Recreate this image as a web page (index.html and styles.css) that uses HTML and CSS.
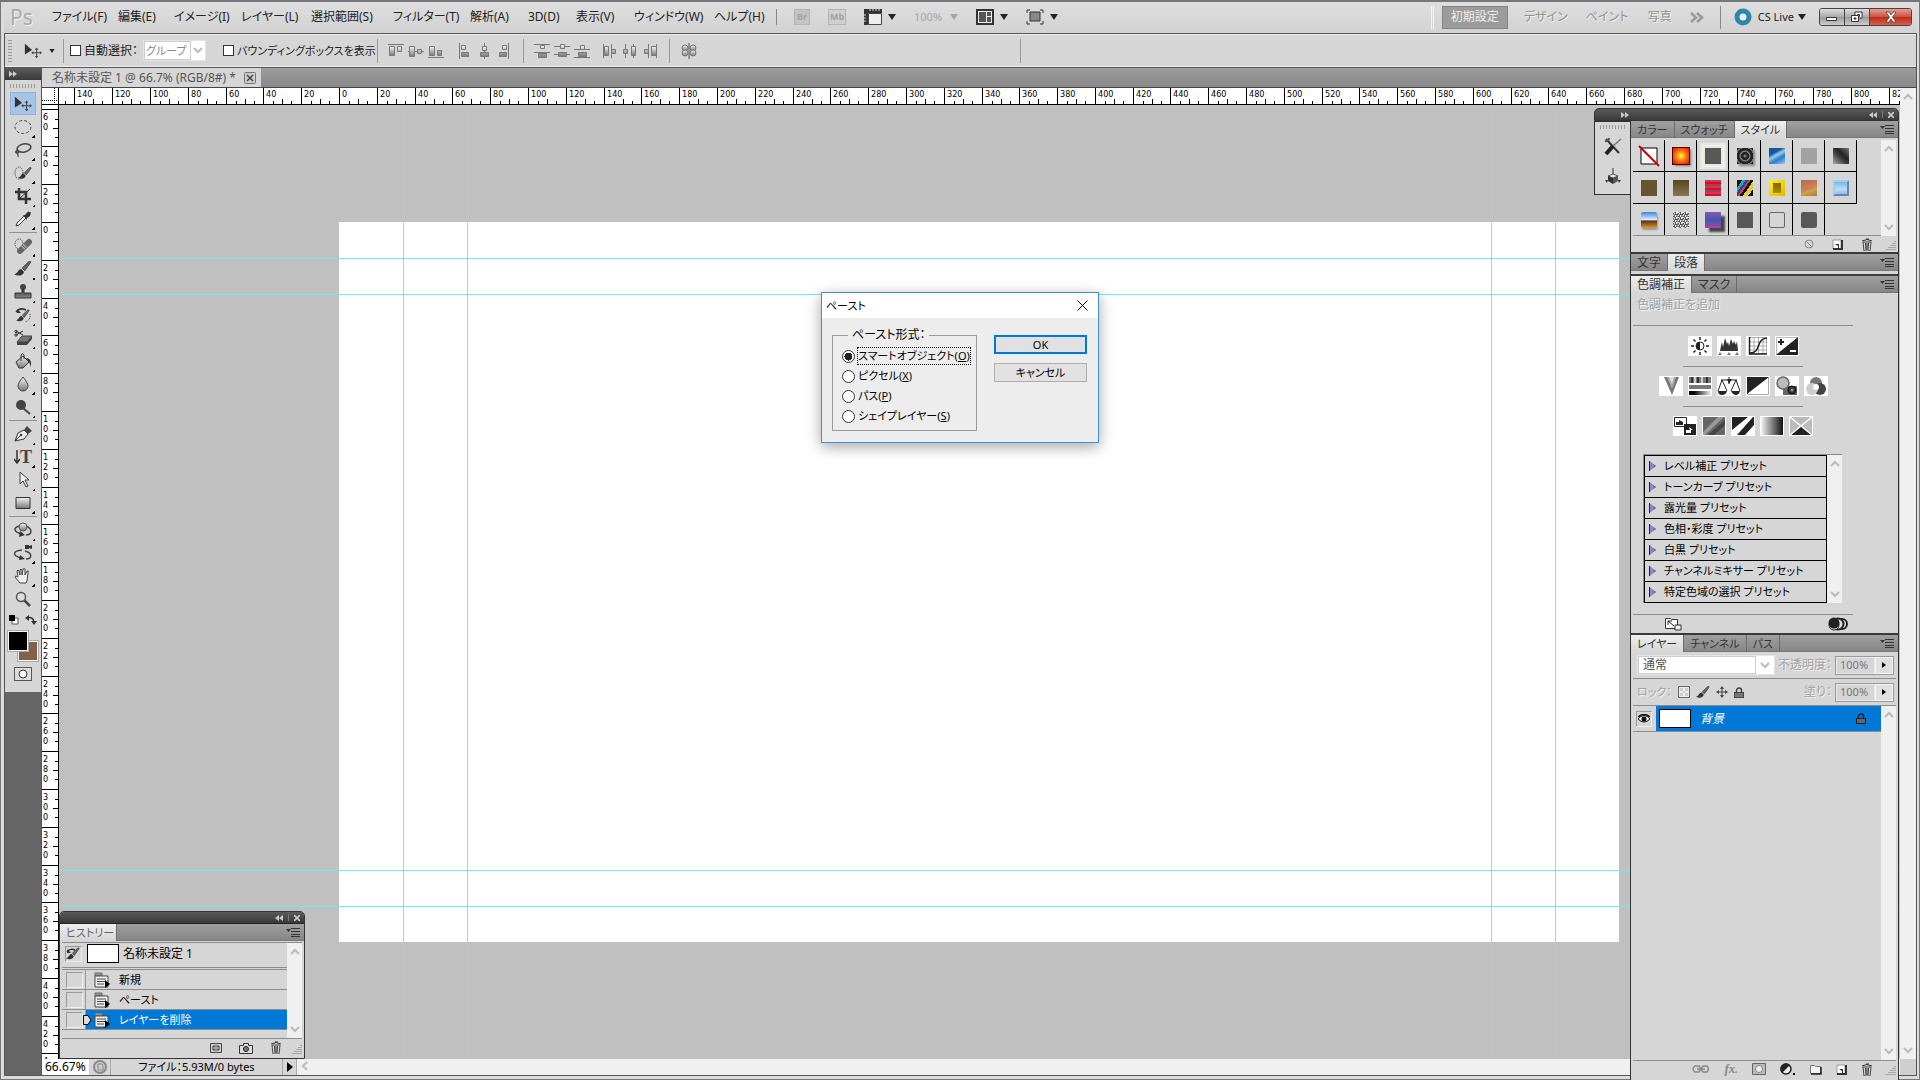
FILE: index.html
```html
<!DOCTYPE html>
<html lang="ja">
  <head>
    <meta charset="UTF-8" />
    <title>名称未設定 1 @ 66.7% (RGB/8#) *</title>
    <link rel="stylesheet" href="styles.css">
  </head>
  <body>
    <!-- shared icons -->
    <svg class="defs" aria-hidden="true">
      <defs>
        <linearGradient id="steel" x1="0" y1="0" x2="0" y2="1"><stop offset="0" stop-color="#f4f4f4" /><stop offset="1" stop-color="#777" /></linearGradient>
        <linearGradient id="dark" x1="0" y1="0" x2="0" y2="1"><stop offset="0" stop-color="#333" /><stop offset="1" stop-color="#888" /></linearGradient>
        <linearGradient id="side" x1="0" y1="0" x2="1" y2="0"><stop offset="0" stop-color="#f4f4f4" /><stop offset="1" stop-color="#111" /></linearGradient>
      </defs>
      <symbol id="down" viewBox="0 0 8 6"><path d="M0 0h8L4 6z" fill="currentColor" /></symbol>
      <symbol id="chev-down" viewBox="0 0 10 7"><path d="M1 1l4 4 4-4" fill="none" stroke="currentColor" stroke-width="2" /></symbol>
      <symbol id="chev-up" viewBox="0 0 10 7"><path d="M1 6l4-4 4 4" fill="none" stroke="currentColor" stroke-width="2" /></symbol>
      <symbol id="rewind" viewBox="0 0 8 6"><path d="M4 0v6L0 3zM8 0v6L4 3z" fill="#ccc" /></symbol>
      <symbol id="forward" viewBox="0 0 8 6"><path d="M0 0v6l4-3zM4 0v6l4-3z" fill="#ccc" /></symbol>
      <symbol id="cross" viewBox="0 0 6 6"><path d="M0 0l6 6M6 0L0 6" stroke="#ccc" stroke-width="1.6" /></symbol>
      <symbol id="panelmenu" viewBox="0 0 14 10"><path d="M0 2h5L2.500 5z" fill="#333" /><path d="M5 1.500h9M5 4.500h9M5 7.500h9M5 9.500h9" stroke="#333" /></symbol>
      <symbol id="grip" viewBox="0 0 10 10"><path d="M9 0v10M7 2v8M5 4v6M3 6v4M1 8v2" stroke="#777" stroke-dasharray="1 1" /></symbol>
      <symbol id="trash" viewBox="0 0 12 13"><path d="M2 4h8l-1 9H3z" fill="#ddd" stroke="#444" /><path d="M1 3q5-3 10 0M5 1h3M4.500 5l.5 7M6 5v7M7.500 5L7 12" fill="none" stroke="#333" /></symbol>
      <symbol id="newpage" viewBox="0 0 11 11"><path d="M1 1h8v9H1z" fill="#fff" stroke="#999" /><path d="M1 10h9V1" fill="none" stroke="#333" stroke-width="2" /><path d="M3 5h4v4H6V7z" fill="#333" /></symbol>
      <symbol id="state" viewBox="0 0 16 16"><path d="M1 1h7v3H1z" fill="#999" stroke="#666" /><path d="M1 4h13v11H1z" fill="#f4f4f4" stroke="#444" /><path d="M3 7h9M3 9.500h9M3 12h7" stroke="#444" /><path d="M11 8v8l5-4z" fill="#000" /></symbol>
      <symbol id="brush" viewBox="0 0 20 18"><path d="M19 1l-2-1-8 8 3 3z" fill="#666" stroke="#222" stroke-width=".7" /><path d="M8 9c-4 0-3 5-8 6 5 3 11 1 11-3z" fill="#333" /></symbol>
      <symbol id="lock" viewBox="0 0 10 11"><path d="M2.500 5V3.500a2.500 2.500 0 015 0V5" fill="none" stroke="currentColor" stroke-width="1.500" /><path d="M0 5h10v6H0z" fill="currentColor" /><path d="M1 7h8M1 9h8" stroke="#aaa" /></symbol>
      <symbol id="cross4" viewBox="0 0 12 12"><path d="M6 1v10M1 6h10" stroke="#444" /><path d="M6 0l2 3H4zM6 12l2-3H4zM0 6l3-2v4zM12 6L9 4v4z" fill="#444" /></symbol>
      <symbol id="move" viewBox="0 0 20 16"><path d="M1 0l8 7-8 5z" fill="#333" /><path d="M14 5v10M9 10h10" stroke="#444" stroke-width="1.200" /><path d="M14 4l2 2.500h-4zM14 16l2-2.500h-4zM8 10l2.500-2v4zM20 10l-2.500-2v4z" fill="#444" /></symbol>
    </svg>

    <div class="app">
      <header class="menubar">
        <span class="logo">Ps</span>
        <nav class="menu">
          <a href="#">ファイル(F)</a>
          <a href="#">編集(E)</a>
          <a href="#">イメージ(I)</a>
          <a href="#">レイヤー(L)</a>
          <a href="#">選択範囲(S)</a>
          <a href="#">フィルター(T)</a>
          <a href="#">解析(A)</a>
          <a href="#">3D(D)</a>
          <a href="#">表示(V)</a>
          <a href="#">ウィンドウ(W)</a>
          <a href="#">ヘルプ(H)</a>
        </nav>
        <div class="appbar">
          <button class="badge" disabled>Br</button>
          <button class="badge folder" disabled>Mb</button>
          <button class="drop" aria-label="エクストラを表示">
            <svg width="18" height="16"><path d="M4.500 4.500h13v11h-13z" fill="#eee" stroke="#444" /><path d="M0 0h18v4H4v12H0z" fill="#333" /><path d="M6 0v2M9 0v2M12 0v2M15 0v2M0 6h2M0 9h2M0 12h2" stroke="#ddd" /></svg>
            <svg class="arrow"><use href="#down" /></svg>
          </button>
          <button class="drop zoom" disabled>100% <svg class="arrow"><use href="#down" /></svg></button>
          <button class="drop" aria-label="ドキュメントの配置">
            <svg width="18" height="16"><path d="M1 1h16v14H1z" fill="#eee" stroke="#333" stroke-width="2" /><path d="M3 3h7v10H3zM11 3h4v4h-4zM11 8h4v5h-4z" fill="#555" /></svg>
            <svg class="arrow"><use href="#down" /></svg>
          </button>
          <button class="drop" aria-label="スクリーンモード">
            <svg width="18" height="16"><path d="M4 3h10v9H4z" fill="#888" stroke="#333" /><path d="M1 4V1h3M14 1h3v3M17 12v3h-3M4 15H1v-3" fill="none" stroke="#333" /></svg>
            <svg class="arrow"><use href="#down" /></svg>
          </button>
        </div>
        <div class="workspaces">
          <button class="ws current">初期設定</button>
          <button class="ws">デザイン</button>
          <button class="ws">ペイント</button>
          <button class="ws">写真</button>
          <button class="more" aria-label="その他"><svg width="14" height="11"><path d="M1 1l5 4.500L1 10M7 1l5 4.500L7 10" fill="none" stroke="#999" stroke-width="2.500" /></svg></button>
        </div>
        <button class="cslive">
          <svg width="18" height="18"><circle cx="9" cy="9" r="6" fill="#eee" stroke="#2d86ad" stroke-width="5" /></svg>
          CS Live
          <svg class="arrow"><use href="#down" /></svg>
        </button>
        <div class="winbuttons">
          <button aria-label="最小化"><svg width="14" height="12"><path d="M1.500 6.500h10v3h-10z" fill="#fff" stroke="#333" /></svg></button>
          <button aria-label="元に戻す"><svg width="14" height="12"><path d="M5 1h7v6H5z" fill="#fff" stroke="#333" /><path d="M7.500 3.500h2v2h-2z" fill="none" stroke="#333" /><path d="M1.500 4.500h7v6h-7z" fill="#fff" stroke="#333" /><path d="M4 7h2v1H4z" stroke="#333" /></svg></button>
          <button class="close" aria-label="閉じる"><svg width="14" height="12"><path d="M2 1h3l2 3 2-3h3L8.500 6l3.500 5H9L7 8l-2 3H2l3.500-5z" fill="#fff" stroke="#444" stroke-width=".8" /></svg></button>
        </div>
      </header>

      <div class="frame">
        <div class="options">
          <span class="dots"></span>
          <button class="drop tool" aria-label="移動ツール">
            <svg width="18" height="16"><use href="#move" /></svg>
            <svg class="arrow small"><use href="#down" /></svg>
          </button>
          <div class="group auto">
            <label><input type="checkbox"> 自動選択：</label>
            <span class="select">
              <select disabled aria-label="自動選択の対象"><option>グループ</option></select>
              <svg width="10" height="7"><use href="#chev-down" /></svg>
            </span>
            <label class="bbox"><input type="checkbox"> バウンディングボックスを表示</label>
          </div>
          <div class="group align">
            <span class="three">
              <svg width="16" height="16"><path d="M0 1.500h16" stroke="#777" /><path d="M1.500 3.500h5v9h-5zM9.500 3.500h4v5h-4z" fill="url(#steel)" stroke="#777" /></svg>
              <svg width="16" height="16"><path d="M0 8.500h16" stroke="#777" /><path d="M1.500 3.500h5v10h-5zM9.500 6.500h4v4h-4z" fill="url(#steel)" stroke="#777" /></svg>
              <svg width="16" height="16"><path d="M0 14.500h16" stroke="#777" /><path d="M1.500 3.500h5v9h-5zM9.500 7.500h4v5h-4z" fill="url(#steel)" stroke="#777" /></svg>
            </span>
            <span class="three">
              <svg width="16" height="16"><path d="M3.500 0v16" stroke="#777" /><path d="M5.500 2.500h4v4h-4zM5.500 9.500h7v4h-7z" fill="url(#steel)" stroke="#777" /></svg>
              <svg width="16" height="16"><path d="M8.500 0v16" stroke="#777" /><path d="M6.500 3.500h4v4h-4zM4.500 9.500h8v4h-8z" fill="url(#steel)" stroke="#777" /></svg>
              <svg width="16" height="16"><path d="M12.500 0v16" stroke="#777" /><path d="M6.500 2.500h4v4h-4zM3.500 9.500h7v4h-7z" fill="url(#steel)" stroke="#777" /></svg>
            </span>
          </div>
          <div class="group align">
            <span class="three">
              <svg width="16" height="16"><path d="M0 1.500h16M0 9.500h16" stroke="#777" /><path d="M6.500 2.500h4v3h-4zM4.500 10.500h8v4h-8z" fill="url(#steel)" stroke="#777" /></svg>
              <svg width="16" height="16"><path d="M0 3.500h16M0 11.500h16" stroke="#777" /><path d="M6.500 1.500h4v4h-4zM4.500 9.500h8v4h-8z" fill="url(#steel)" stroke="#777" /></svg>
              <svg width="16" height="16"><path d="M0 6.500h16M0 14.500h16" stroke="#777" /><path d="M6.500 2.500h4v4h-4zM4.500 9.500h8v4h-8z" fill="url(#steel)" stroke="#777" /></svg>
            </span>
            <span class="three">
              <svg width="16" height="16"><path d="M1.500 1v14M9.500 1v14" stroke="#777" /><path d="M2.500 3.500h4v9h-4zM9.500 6.500h4v4h-4z" fill="url(#steel)" stroke="#777" /></svg>
              <svg width="16" height="16"><path d="M3.500 1v14M11.500 1v14" stroke="#777" /><path d="M1.500 6.500h4v4h-4zM9.500 3.500h4v9h-4z" fill="url(#steel)" stroke="#777" /></svg>
              <svg width="16" height="16"><path d="M6.500 1v14M14.500 1v14" stroke="#777" /><path d="M2.500 6.500h4v4h-4zM9.500 3.500h5v9h-5z" fill="url(#steel)" stroke="#777" /></svg>
            </span>
          </div>
          <div class="group one">
            <svg width="16" height="16"><ellipse cx="4" cy="5" rx="3" ry="3" fill="url(#steel)" stroke="#777" /><ellipse cx="4" cy="10" rx="3" ry="3" fill="url(#steel)" stroke="#777" /><ellipse cx="12" cy="5" rx="3" ry="3" fill="url(#steel)" stroke="#777" /><ellipse cx="12" cy="10" rx="3" ry="3" fill="url(#steel)" stroke="#777" /><path d="M8 0v16" stroke="#555" /></svg>
          </div>
          <div class="group"></div>
        </div>

        <div class="work">
          <aside class="toolcol">
            <div class="bar"><svg width="8" height="6"><use href="#forward" /></svg></div>
            <div class="toolbox">
              <span class="hdots"></span>
              <button class="t on" aria-label="移動"><svg width="18" height="16"><use href="#move" /></svg></button>
              <button class="t more-tools" aria-label="楕円形選択"><svg width="18" height="16"><ellipse cx="9" cy="8" rx="8" ry="6.500" fill="none" stroke="#444" stroke-dasharray="3 2" /></svg></button>
              <button class="t more-tools" aria-label="なげなわ"><svg width="18" height="16"><ellipse cx="10" cy="6" rx="7" ry="4" transform="rotate(-12 10 6)" fill="none" stroke="#444" stroke-width="1.500" /><path d="M4 8c-4 1-2 4 0 3s0-3-1-2 2 3 1 6" fill="none" stroke="#444" stroke-width="1.200" /></svg></button>
              <button class="t more-tools" aria-label="クイック選択"><svg width="18" height="16"><ellipse cx="5" cy="8" rx="4" ry="6" fill="none" stroke="#333" stroke-dasharray="1 1" /><svg x="4" y="2" width="14" height="13"><use href="#brush" /></svg></svg></button>
              <button class="t more-tools" aria-label="切り抜き"><svg width="18" height="16"><path d="M5 0v11h12M1 4h11v12" fill="none" stroke="#333" stroke-width="2.500" /><path d="M5 11L16 1" stroke="#333" /></svg></button>
              <button class="t more-tools" aria-label="スポイト"><svg width="18" height="16"><path d="M2 15l1-3 7-7 2 2-7 7z" fill="#eee" stroke="#444" /><path d="M9 4l2 0 3-3.500 3 1-1 3.500-3 2 0 2z" fill="#333" /></svg></button>
              <hr>
              <button class="t more-tools" aria-label="スポット修復"><svg width="18" height="16"><ellipse cx="5" cy="6" rx="4" ry="5" fill="none" stroke="#333" stroke-dasharray="1 1" /><path d="M6 13L15 4" stroke="#666" stroke-width="6" stroke-linecap="round" /><path d="M9 10l3-3" stroke="#bbb" stroke-width="5" stroke-dasharray="1 1" /></svg></button>
              <button class="t more-tools" aria-label="ブラシ"><svg width="18" height="16"><use href="#brush" /></svg></button>
              <button class="t more-tools" aria-label="スタンプ"><svg width="18" height="16"><circle cx="9" cy="3" r="3" fill="#444" /><path d="M8 5h2v4h7v5H1V9h7z" fill="url(#dark)" stroke="#333" /></svg></button>
              <button class="t more-tools" aria-label="ヒストリーブラシ"><svg width="18" height="16"><path d="M2 5q4-5 10-2" fill="none" stroke="#333" stroke-width="1.500" /><path d="M3 2l0 4 4 0z" fill="#333" /><path d="M16 7q1 6-5 8" fill="none" stroke="#333" stroke-dasharray="1 1" /><svg x="2" y="2" width="14" height="14"><use href="#brush" /></svg></svg></button>
              <button class="t more-tools" aria-label="消しゴム"><svg width="18" height="16"><path d="M3 12l5-6h10l-5 6z" fill="#777" stroke="#444" /><path d="M3 12v3h10l5-6V6l-5 6z" fill="#444" /><path d="M2 1l7 4M2 5l7-4" stroke="#333" /><circle cx="2" cy="1.500" r="1.200" fill="none" stroke="#333" /><circle cx="2" cy="5" r="1.200" fill="none" stroke="#333" /></svg></button>
              <button class="t more-tools" aria-label="塗りつぶし"><svg width="18" height="16"><path d="M2 9l7-6 6 6-6 6H5z" fill="url(#steel)" stroke="#333" /><path d="M7 8V2q2-3 3 0v4" fill="none" stroke="#333" /><path d="M12 5q6 0 5 9l-2-5z" fill="#333" /></svg></button>
              <button class="t more-tools" aria-label="ぼかし"><svg width="18" height="16"><path d="M9 1q5 6 5 9a5 5 0 01-10 0q0-3 5-9z" fill="url(#steel)" stroke="#444" /></svg></button>
              <button class="t more-tools" aria-label="覆い焼き"><svg width="18" height="16"><path d="M9 9l7 6" stroke="#444" stroke-width="2" /><circle cx="7" cy="6" r="5" fill="#444" /></svg></button>
              <hr>
              <button class="t more-tools" aria-label="ペン"><svg width="18" height="16"><path d="M1 15l3-8 6-3 4 4-4 5z" fill="#eee" stroke="#333" /><path d="M10 4l3-4 5 5-4 3z" fill="#444" /><path d="M1 15l6-6" stroke="#333" /><circle cx="7" cy="9" r="1.200" fill="#333" /></svg></button>
              <button class="t more-tools type" aria-label="縦書き文字"><svg width="6" height="14"><path d="M3 0v12M0 9l3 4 3-4" fill="none" stroke="#333" stroke-width="1.500" /></svg>T</button>
              <button class="t more-tools" aria-label="パス選択"><svg width="18" height="16"><path d="M6 0v12l3-3 3 6 2-1-3-6h4z" fill="#eee" stroke="#444" /></svg></button>
              <button class="t more-tools" aria-label="長方形"><svg width="18" height="16"><path d="M2 2.500h14v11H2z" fill="url(#steel)" stroke="#333" /></svg></button>
              <hr>
              <button class="t more-tools" aria-label="3D回転"><svg width="18" height="16"><path d="M6 4C-1 5-1 10 8 12M12 4c7 3 6 9 0 9" fill="none" stroke="#444" stroke-width="1.500" /><circle cx="9" cy="5" r="4" fill="url(#steel)" stroke="#555" /><path d="M6 9l5 4-6 2z" fill="#333" /></svg></button>
              <button class="t more-tools" aria-label="3Dカメラ"><svg width="18" height="16"><path d="M8 5C-2 6-2 11 8 13M11 6c8 2 7 8 1 8" fill="none" stroke="#444" stroke-width="1.500" /><path d="M11 0h4v4h-4zM15 1l3-1v4l-3-1zM6 10l5 4-6 1z" fill="#333" /></svg></button>
              <button class="t more-tools" aria-label="手のひら"><svg width="18" height="16"><path d="M6 15L1 9q0-2 3 0L3 3q1-2 2 0l1 4V2q1-2 2 0v5l1-6q2-1 2 0v6l2-4q2-1 1 2l-1 8-1 2z" fill="#eee" stroke="#444" /></svg></button>
              <button class="t" aria-label="ズーム"><svg width="18" height="16"><path d="M10 9l6 6" stroke="#444" stroke-width="2.500" /><circle cx="7" cy="6" r="4.500" fill="#ddd" stroke="#555" stroke-width="1.500" /></svg></button>
              <svg class="defaults" width="30" height="12"><path d="M4 4h6v6H4z" fill="#fff" stroke="#555" /><path d="M1 1h6v6H1z" fill="#000" /><path d="M19 4q6-2 7 4" fill="none" stroke="#333" stroke-width="1.500" /><path d="M17 4l4-3v6zM23 7h6l-3 4z" fill="#333" /></svg>
              <div class="colors"><button class="fg" aria-label="描画色"></button><button class="bg" aria-label="背景色"></button></div>
              <button class="mask" aria-label="クイックマスク"><svg width="16" height="12"><circle cx="8" cy="6" r="4" fill="#fff" stroke="#333" /></svg></button>
            </div>
          </aside>

          <main class="doc">
            <div class="tabs">
              <button class="doctab">名称未設定 1 @ 66.7% (RGB/8#) * <svg width="12" height="12"><rect x=".5" y=".5" width="11" height="11" rx="1" fill="#ccc" stroke="#777" /><path d="M3 3l6 6M9 3L3 9" stroke="#444" stroke-width="1.500" /></svg></button>
            </div>
            <div class="view">
              <div class="corner"></div>
              <div class="ruler h"></div>
              <div class="ruler v"></div>
              <div class="stage">
                <div class="paper"></div>
                <i class="guide gv g1"></i><i class="guide gv g2"></i><i class="guide gv g3"></i><i class="guide gv g4"></i>
                <i class="guide gh g5"></i><i class="guide gh g6"></i><i class="guide gh g7"></i><i class="guide gh g8"></i>

                <section class="panel history">
                  <div class="bar">
                    <svg width="8" height="6"><use href="#rewind" /></svg><i></i><svg width="6" height="6"><use href="#cross" /></svg>
                  </div>
                  <div class="ptabs"><button class="on">ヒストリー</button><svg width="14" height="10"><use href="#panelmenu" /></svg></div>
                  <div class="hbody">
                    <div class="hlist">
                      <div class="snap">
                        <span class="box"><svg width="14" height="14"><path d="M1 5q3-4 8-2" fill="none" stroke="#333" stroke-width="1.500" /><path d="M1 2v4h4z" fill="#333" /><svg width="14" height="14"><use href="#brush" /></svg></svg></span>
                        <span class="thumb"></span>名称未設定 1
                      </div>
                      <div class="hrow"><span class="box"></span><span class="name"><svg width="16" height="16"><use href="#state" /></svg>新規</span></div>
                      <div class="hrow"><span class="box"></span><span class="name"><svg width="16" height="16"><use href="#state" /></svg>ペースト</span></div>
                      <div class="hrow sel"><span class="box"></span><span class="name"><svg class="pointer" width="9" height="10"><path d="M.5.500H5l3 4.500-3 4.500H.5z" fill="#ddd" stroke="#000" /></svg><svg width="16" height="16"><use href="#state" /></svg>レイヤーを削除</span></div>
                    </div>
                    <div class="scroll"><svg><use href="#chev-up" /></svg><svg><use href="#chev-down" /></svg></div>
                  </div>
                  <footer>
                    <svg width="12" height="12"><path d="M.5 1.500h11v9H.5z" fill="#ccc" stroke="#444" /><path d="M3 4h6v4H3z" fill="#aaa" stroke="#444" /></svg>
                    <svg width="14" height="12"><path d="M.5 3.500h4v-2h5v2h4v8H.5z" fill="#ddd" stroke="#333" /><circle cx="7" cy="7" r="2.500" fill="#777" stroke="#222" /></svg>
                    <svg width="12" height="13"><use href="#trash" /></svg>
                    <svg class="grip"><use href="#grip" /></svg>
                  </footer>
                </section>
              </div>
              <div class="scroll main"><svg><use href="#chev-up" /></svg><svg><use href="#chev-down" /></svg></div>
            </div>
            <div class="status">
              <input type="text" value="66.67%" aria-label="表示倍率">
              <span class="ver"><svg width="14" height="14"><circle cx="7" cy="7" r="6" fill="#ccc" stroke="#888" stroke-width="2" /><path d="M5 4h4l1 2v4H5z" fill="none" stroke="#888" /></svg></span>
              <span class="info">ファイル：5.93M/0 bytes</span>
              <button aria-label="ステータスメニュー"><svg width="6" height="10"><path d="M0 0l6 5-6 5z" /></svg></button>
              <div class="hscroll"><svg width="7" height="10"><path d="M6 1L2 5l4 4" fill="none" stroke="#bbb" stroke-width="2" /></svg></div>
              <div class="end"></div>
            </div>
          </main>

          <div class="dock">
            <div class="bar wide"><svg width="8" height="6"><use href="#forward" /></svg><b></b><svg width="8" height="6"><use href="#rewind" /></svg><i></i><svg width="6" height="6"><use href="#cross" /></svg></div>
            <div class="dockrow">
              <div class="icons">
                <span class="hdots"></span>
                <svg width="18" height="18"><path d="M2 2l13 14" stroke="#333" stroke-width="2" /><path d="M1 4a3 3 0 004-3" fill="none" stroke="#555" stroke-width="2" /><path d="M17 2L9 9" stroke="#777" stroke-width="1.500" /><path d="M9 9l-7 8" stroke="#222" stroke-width="4" /></svg>
                <svg width="16" height="16"><path d="M8 0v8" stroke="#333" /><path d="M3 8l5-2 5 2-5 2z" fill="#eee" stroke="#555" /><path d="M3 8l5 2v6l-5-3z" fill="#333" /><path d="M8 10l5-2v5l-5 3z" fill="#555" /><path d="M0 12h3l-1 3zM16 12h-3l1 3z" fill="#333" /></svg>
              </div>
              <div class="panels">
                <section class="pnl styles">
                  <div class="ptabs"><button>カラー</button><button>スウォッチ</button><button class="on">スタイル</button><svg width="14" height="10"><use href="#panelmenu" /></svg></div>
                  <div class="sbody">
                    <div class="swatches">
                      <span><svg width="22" height="22"><path d="M3 3h16v16H3z" fill="#fff" stroke="#000" /><path d="M1 1l20 20" stroke="#c00" stroke-width="2" /></svg></span>
                      <span><i class="s fire"></i></span><span class="picked"><i class="s"></i></span><span><i class="s rings"></i></span><span><i class="s blue"></i></span><span><i class="s pale"></i></span><span><i class="s smoke"></i></span>
                      <span><i class="s brown"></i></span><span><i class="s bronze"></i></span><span><i class="s stripes"></i></span><span><i class="s camo"></i></span><span><i class="s gold"></i></span><span><i class="s sand"></i></span><span><i class="s sky"></i></span>
                      <span><i class="s chrome"></i></span><span><i class="s noise"></i></span><span><i class="s violet"></i></span><span><i class="s"></i></span><span><i class="s hollow"></i></span><span><i class="s soft"></i></span><span class="none"></span>
                    </div>
                    <div class="scroll"><svg><use href="#chev-up" /></svg><svg><use href="#chev-down" /></svg></div>
                  </div>
                  <footer>
                    <svg width="10" height="10"><circle cx="5" cy="5" r="4" fill="none" stroke="#888" /><path d="M2 2l6 6" stroke="#888" /></svg>
                    <svg width="11" height="11"><use href="#newpage" /></svg>
                    <svg width="12" height="13"><use href="#trash" /></svg>
                    <svg class="grip"><use href="#grip" /></svg>
                  </footer>
                </section>

                <section class="pnl closed">
                  <div class="ptabs"><button>文字</button><button class="on">段落</button><svg width="14" height="10"><use href="#panelmenu" /></svg></div>
                </section>

                <section class="pnl adjust">
                  <div class="ptabs"><button class="on">色調補正</button><button>マスク</button><svg width="14" height="10"><use href="#panelmenu" /></svg></div>
                  <div class="abody">
                    <p>色調補正を追加</p>
                    <div class="irow first">
                      <button aria-label="明るさ・コントラスト"><svg width="24" height="20"><circle cx="12" cy="10" r="4" fill="#fff" stroke="#222" /><path d="M12 6a4 4 0 000 8z" fill="#222" /><path d="M12 1v3M12 16v3M3 10h3M18 10h3M5.500 3.500l2 2M16.500 14.500l2 2M5.500 16.500l2-2M16.500 5.500l2-2" stroke="#222" stroke-width="1.500" /></svg></button>
                      <button aria-label="レベル補正"><svg width="24" height="20"><path d="M3 15l1-5 1-4 1 5 2-9 2 6 1-2 1 4 2-7 2 5 1-3 2 4 1-4 1 10z" fill="#333" /><path d="M3 16l2 3H1zM12 16l2 3h-4zM20 16l2 3h-4z" fill="#777" /></svg></button>
                      <button aria-label="トーンカーブ"><svg width="24" height="20"><path d="M3.500 1.500h17v16h-17zM3 6h18M3 10h18M3 14h18M8 1v17M12.500 1v17M17 1v17" fill="none" stroke="#aaa" /><path d="M3.500 1v17H21M4 17c12 0 5-14 17-15" fill="none" stroke="#222" stroke-width="1.500" /></svg></button>
                      <button aria-label="露光量"><svg width="24" height="20"><path d="M1.500 1.500h21v17h-21z" fill="#fff" stroke="#bbb" /><path d="M23 1v18H1z" fill="#222" /><path d="M3 6h6M6 3v6" stroke="#222" stroke-width="2" /><path d="M15 15h6" stroke="#fff" stroke-width="2" /></svg></button>
                    </div>
                    <div class="irow">
                      <button aria-label="自然な彩度"><svg width="24" height="20"><path d="M5 1h15l-7 18z" fill="#777" /><path d="M8 1h9l-4 12z" fill="#aaa" /><path d="M10 1h5l-2 7z" fill="#ddd" /></svg></button>
                      <button aria-label="色相・彩度"><svg width="24" height="20"><path d="M1 1h22v6H1zM1 9h22v4H1z" fill="#777" /><path d="M4 1v6M10 1v6M19 1v6" stroke="#333" stroke-width="2" /><path d="M7 1v6M14 1v6" stroke="#ccc" stroke-width="2" /><path d="M1 15h22v4H1z" fill="#000" /><path d="M7 15h16v4H7z" fill="url(#side)" transform="rotate(180 15 17)" /></svg></button>
                      <button aria-label="カラーバランス"><svg width="24" height="20"><path d="M12 1v7M4 4h16M5 4L1 15M5 4l5 11M19 4l-5 11M19 4l4 11" fill="none" stroke="#222" /><path d="M1 15h9q-1 4-5 4t-4-4zM14 15h9q-1 4-4 4t-5-4zM10 3h5l-3 5z" fill="#222" /></svg></button>
                      <button aria-label="白黒"><svg width="24" height="20"><path d="M1.500 1.500h21v17h-21z" fill="#fff" stroke="#aaa" /><path d="M1 1h22L1 18z" fill="#222" /></svg></button>
                      <button aria-label="レンズフィルター"><svg width="24" height="20"><path d="M8 10h14v9H8z" fill="#666" /><circle cx="17" cy="14" r="4" fill="#333" stroke="#111" /><circle cx="17" cy="14" r="1.500" fill="#999" /><circle cx="8" cy="7" r="6" fill="#bbb" stroke="#666" stroke-width="1.500" /></svg></button>
                      <button aria-label="チャンネルミキサー"><svg width="24" height="20"><circle cx="12" cy="7" r="6" fill="#777" /><circle cx="16" cy="13" r="6" fill="#444" /><circle cx="8" cy="13" r="6" fill="#ccc" /><circle cx="12" cy="11" r="3" fill="#fff" /></svg></button>
                    </div>
                    <div class="irow">
                      <button aria-label="階調の反転"><svg width="24" height="20"><path d="M1.500 1.500h12v9h-12z" fill="#fff" stroke="#222" /><path d="M3 6h3V4l4 2v3H3zM11 8h12v11H11z" fill="#222" /><path d="M13 14h4l-1-3 4 3h-2v3h-5z" fill="#fff" /></svg></button>
                      <button aria-label="ポスタリゼーション"><svg width="24" height="20"><path d="M1 1h22v18H1z" fill="#666" /><path d="M1 16L16 1h6L3 19H1z" fill="#999" /><path d="M6 19L23 4v5L12 19z" fill="#444" /></svg></button>
                      <button aria-label="2階調化"><svg width="24" height="20"><path d="M1 1h16L1 14zM6 19L22 1h1v8L14 19z" fill="#222" /></svg></button>
                      <button aria-label="グラデーションマップ"><svg width="24" height="20"><path d="M1 1h22v18H1z" fill="url(#side)" /></svg></button>
                      <button aria-label="特定色域の選択"><svg width="24" height="20"><path d="M1 1h22v18H1z" fill="#bbb" /><path d="M2 19l10-9 11 9z" fill="#222" /><path d="M1 1l22 18M23 1L1 19" stroke="#fff" stroke-width="1.500" /></svg></button>
                    </div>
                    <div class="presets">
                      <ul>
                        <li>レベル補正 プリセット</li>
                        <li>トーンカーブ プリセット</li>
                        <li>露光量 プリセット</li>
                        <li>色相・彩度 プリセット</li>
                        <li>白黒 プリセット</li>
                        <li>チャンネルミキサー プリセット</li>
                        <li>特定色域の選択 プリセット</li>
                      </ul>
                      <div class="scroll"><svg><use href="#chev-up" /></svg><svg><use href="#chev-down" /></svg></div>
                    </div>
                    <div class="afoot">
                      <svg width="17" height="14"><path d="M.5 1.500h5l1 1h6v9H.5z" fill="#fff" stroke="#333" /><path d="M10 8h6v5h-6z" fill="#eee" stroke="#333" /><path d="M3 4l6 5M3 8V4h4" fill="none" stroke="#222" /></svg>
                      <svg width="20" height="14"><circle cx="14" cy="7" r="5" fill="#ddd" stroke="#222" stroke-width="2" /><circle cx="10" cy="7" r="5.500" fill="#ddd" stroke="#222" stroke-width="2" /><circle cx="6" cy="8" r="5" fill="#ddd" stroke="#333" /><circle cx="6" cy="6" r="5.500" fill="#222" /></svg>
                    </div>
                  </div>
                </section>

                <section class="pnl layers">
                  <div class="ptabs"><button class="on">レイヤー</button><button>チャンネル</button><button>パス</button><svg width="14" height="10"><use href="#panelmenu" /></svg></div>
                  <div class="lopts">
                    <span class="select">
                      <select aria-label="描画モード"><option>通常</option></select>
                      <svg width="10" height="7"><use href="#chev-down" /></svg>
                    </span>
                    <label for="opacity">不透明度：</label>
                    <span class="num"><input id="opacity" type="text" value="100%" disabled><button aria-label="不透明度スライダー"><svg width="4" height="6"><path d="M0 0l4 3-4 3z" /></svg></button></span>
                  </div>
                  <div class="lopts second">
                    <span class="locks">ロック：
                      <svg width="12" height="12"><path d="M.5.500h11v11H.5z" fill="#eee" stroke="#666" /><path d="M2 2h3v3H2zM7 2h3v3H7zM5 5h2v2H5zM2 7h3v3H2zM7 7h3v3H7z" fill="#ccc" /></svg>
                      <svg width="14" height="13"><use href="#brush" /></svg>
                      <svg width="12" height="12"><use href="#cross4" /></svg>
                      <svg width="10" height="11"><use href="#lock" /></svg>
                    </span>
                    <label for="fill">塗り：</label>
                    <span class="num"><input id="fill" type="text" value="100%" disabled><button aria-label="塗りスライダー"><svg width="4" height="6"><path d="M0 0l4 3-4 3z" /></svg></button></span>
                  </div>
                  <div class="lbody">
                    <div class="llist">
                      <div class="layer">
                        <span class="eye"><svg width="12" height="10"><path d="M0 5q6-7 12 0-6 6-12 0z" fill="#fff" stroke="#111" /><circle cx="6" cy="5" r="2.500" fill="#111" /><path d="M0 3q6-5 12 0" fill="none" stroke="#111" stroke-width="1.500" /></svg></span>
                        <span class="bgname"><span class="thumb"></span><em>背景</em><svg width="10" height="11"><use href="#lock" /></svg></span>
                      </div>
                    </div>
                    <div class="scroll"><svg><use href="#chev-up" /></svg><svg><use href="#chev-down" /></svg></div>
                  </div>
                  <footer>
                    <svg width="18" height="10"><path d="M3 2h4q3 3 0 6H3Q-1 5 3 2zM11 2h4q3 3 0 6h-4q-3-3 0-6zM5 5h8" fill="none" stroke="#888" stroke-width="1.500" /></svg>
                    <span class="fx">fx<small>.</small></span>
                    <svg width="14" height="12"><path d="M.5.500h13v11H.5z" fill="#bbb" stroke="#666" /><circle cx="7" cy="6" r="3.500" fill="#eee" stroke="#888" /></svg>
                    <svg width="16" height="13"><circle cx="6" cy="6" r="5" fill="#eee" stroke="#222" stroke-width="1.500" /><path d="M2 10a5.500 5.500 0 018-8z" fill="#222" /><path d="M13 10h2v2h-2z" /></svg>
                    <svg width="12" height="11"><path d="M.5 1.500h4l1 1h5v7H.5z" fill="#f4f4f4" stroke="#777" /><path d="M1 10h10V3" fill="none" stroke="#222" stroke-width="1.500" /></svg>
                    <svg width="11" height="11"><use href="#newpage" /></svg>
                    <svg width="12" height="13"><use href="#trash" /></svg>
                    <svg class="grip"><use href="#grip" /></svg>
                  </footer>
                </section>
              </div>
            </div>
          </div>
        </div>
      </div>
    </div>

    <div class="dialog" role="dialog" aria-labelledby="dlg">
      <div class="title"><span id="dlg">ペースト</span><button aria-label="閉じる"><svg width="11" height="11"><path d="M.5.500l10 10M10.500.500l-10 10" stroke="#000" /></svg></button></div>
      <form class="content">
        <fieldset>
          <legend>ペースト形式：</legend>
          <label><input type="radio" name="as" checked><span class="focus">スマートオブジェクト(<u>O</u>)</span></label>
          <label><input type="radio" name="as"><span>ピクセル(<u>X</u>)</span></label>
          <label><input type="radio" name="as"><span>パス(<u>P</u>)</span></label>
          <label><input type="radio" name="as"><span>シェイプレイヤー(<u>S</u>)</span></label>
        </fieldset>
        <div class="btns">
          <button type="button" class="ok">OK</button>
          <button type="button">キャンセル</button>
        </div>
      </form>
    </div>

    <script src="rulers.js"></script>
  </body>
</html>
```
FILE: styles.css
```css
:root {
  --face: #d6d6d6;
  --line: #8c8c8c;
  --blue: #0078d7;
}

* {
  box-sizing: border-box;
}

body {
  margin: 0;
  font-family: "Noto Sans", "Noto Sans CJK JP", sans-serif;
  font-size: 12px;
  line-height: 16px;
  font-feature-settings: "palt";
  color: #222;
  overflow: hidden;
}

button,
input,
select {
  font: inherit;
  font-feature-settings: inherit;
  color: inherit;
  margin: 0;
  padding: 0;
  border: 0;
  border-radius: 0;
  background: none;
}

a {
  color: inherit;
  text-decoration: none;
}

svg {
  display: block;
  flex: none;
}

.defs {
  position: absolute;
  width: 0;
  height: 0;
}

.app {
  height: 100vh;
  display: flex;
  flex-direction: column;
  background: #dcdcdc;
  border: 1px solid #77757a;
  border-top-width: 2px;
  padding: 0 2px 3px 3px;
}

/* menu bar */
.menubar {
  flex: 0 0 31px;
  display: flex;
  align-items: center;
  background: linear-gradient(#dedede, #d2d2d2);
  white-space: nowrap;
  padding-bottom: 1px;
}

.logo {
  width: 48px;
  padding-left: 6px;
  font-size: 21px;
  line-height: 24px;
  color: #aaa;
  text-shadow: 1px 1px #f4f4f4;
}

.menu {
  display: grid;
  grid-template-columns: 66px 56px 67px 70px 82px 77px 58px 48px 58px 80px 62px;
}

.appbar {
  display: flex;
  align-items: center;
  gap: 18px;
  border-left: 1px solid #888;
  padding-left: 17px;
}

.badge {
  width: 16px;
  height: 16px;
  border: 1px solid #b4b4b4;
  background: #c4c4c4;
  color: #a2a2a2;
  font-size: 9px;
  line-height: 12px;
  font-weight: bold;
}

.badge.folder {
  width: 18px;
  background: #d0d0d0;
}

.drop {
  display: flex;
  align-items: center;
  gap: 6px;
}

.arrow {
  width: 8px;
  height: 6px;
}

.arrow.small {
  width: 6px;
  height: 4px;
}

.zoom {
  gap: 8px;
  font-size: 11px;
  color: #a6a6a6;
}

.workspaces {
  margin-left: auto;
  display: flex;
  align-items: center;
  border-left: 3px double #f4f4f4;
  padding: 0 16px 0 8px;
  border-right: 1px solid #888;
}

.ws {
  color: #919191;
  text-shadow: 1px 1px #f0f0f0;
  margin-left: 16px;
  min-width: 46px;
  text-align: left;
}

.ws:nth-child(4) {
  min-width: 26px;
}

.ws.current {
  margin: 0;
  width: 66px;
  height: 23px;
  text-align: center;
  background: #9c9c9c;
  border: 1px solid #848484;
  color: #eee;
  text-shadow: none;
}

.more {
  margin-left: 16px;
}

.cslive {
  display: flex;
  align-items: center;
  gap: 4px;
  margin: 0 13px;
  font-size: 11px;
}

.cslive svg:first-child {
  margin-right: 2px;
}

.winbuttons {
  display: flex;
  margin-right: 5px;
  border: 1px solid #444;
  border-radius: 3px;
  overflow: hidden;
}

.winbuttons button {
  width: 25px;
  height: 16px;
  display: grid;
  place-items: center;
  background: linear-gradient(#ddd, #aaa 50%, #999 50%, #ccc);
  border-right: 1px solid #444;
}

.winbuttons .close {
  width: 41px;
  border: 0;
  background: linear-gradient(#e3a094, #cf5040 50%, #bd2b19 50%, #d4604a);
}

.frame {
  flex: 1;
  min-height: 0;
  display: flex;
  flex-direction: column;
  border: 1px solid #555;
}

/* options bar */
.options {
  flex: 0 0 33px;
  display: flex;
  align-items: center;
  background: var(--face);
  border-top: 1px solid #eee;
  border-bottom: 1px solid #eee;
  white-space: nowrap;
}

.dots {
  width: 4px;
  height: 24px;
  margin: 0 12px 0 3px;
  background: radial-gradient(circle, #999 1px, transparent 1px) 0 0 / 2px 3px;
}

.hdots {
  height: 4px;
  width: 28px;
  background: radial-gradient(circle, #999 1px, transparent 1px) 0 0 / 3px 2px;
}

.tool {
  width: 39px;
  gap: 7px;
}

.group {
  height: 24px;
  display: flex;
  align-items: center;
  border-left: 1px solid #999;
  padding-left: 6px;
}

.group label {
  display: flex;
  align-items: center;
  gap: 3px;
}

.group .bbox {
  margin-left: 17px;
  font-size: 11px;
}

.auto {
  width: 314px;
}

.auto label:first-child {
  width: 73px;
}

.auto .select {
  width: 63px;
  height: 21px;
  font-size: 11px;
}

input[type="checkbox"] {
  appearance: none;
  width: 11px;
  height: 11px;
  background: #fff;
  border: 1px solid #333;
}

.select {
  display: flex;
  align-items: center;
  background: #fff;
  border: 1px solid #e4e4e4;
  color: #bbb;
}

.select select {
  appearance: none;
  flex: 1;
  min-width: 0;
  height: 100%;
  border: 1px solid #ccc;
  padding-left: 4px;
  color: #888;
  opacity: 1;
}

.select svg {
  margin: 0 4px;
}

.auto .select svg {
  margin: 0 2px;
}

.auto .select select {
  padding-left: 1px;
}

.align {
  width: 146px;
  gap: 12px;
  padding-left: 10px;
}

.three {
  display: flex;
  gap: 4px;
}

.one {
  width: 351px;
  padding-left: 11px;
}

/* work area */
.work {
  position: relative;
  flex: 1;
  min-height: 0;
  display: flex;
  border-top: 1px solid #555;
}

.toolcol {
  width: 37px;
  background: #656565;
  border-right: 1px solid #555;
}

.bar {
  height: 12px;
  display: flex;
  align-items: center;
  justify-content: flex-end;
  gap: 5px;
  padding: 0 4px;
  background: linear-gradient(#5a5a5a, #3a3a3a);
}

.bar i {
  width: 1px;
  height: 7px;
  background: #777;
}

.toolcol .bar {
  justify-content: flex-start;
}

.toolbox {
  display: flex;
  flex-direction: column;
  align-items: center;
  background: var(--face);
  height: 612px;
  padding-top: 4px;
}

.toolbox hr {
  width: 28px;
  margin: 2px 0 1px;
  border: 0;
  border-top: 1px solid #909090;
}

.hdots + .t {
  margin-top: 4px;
}

.t {
  width: 26px;
  height: 23px;
  display: flex;
  align-items: center;
  justify-content: center;
}

.t.on {
  background: #a5c5e6;
  border: 1px solid #8fb2d8;
}

.more-tools {
  background: linear-gradient(to bottom right, transparent 50%, #000 50%) 22px 100% / 3px 3px no-repeat;
}

.type {
  font: bold 18px/20px "Liberation Serif", serif;
  color: #444;
}

.defaults {
  margin-top: 4px;
}

.colors {
  width: 30px;
  height: 32px;
  margin: 5px 0 3px;
  display: grid;
  grid-template: repeat(3, 10px) / repeat(3, 10px);
}

.colors button {
  border: 1px solid #f4f4f4;
  outline: 1px solid #aaa;
}

.fg {
  grid-area: 1 / 1 / 3 / 3;
  z-index: 1;
  background: #000;
}

.bg {
  grid-area: 2 / 2 / 4 / 4;
  background: #82604c;
}

.mask {
  margin-top: 1px;
  border: 1px solid #555;
  background: #ddd;
}

.doc {
  flex: 1;
  min-width: 0;
  display: flex;
  flex-direction: column;
}

.tabs {
  flex: 0 0 20px;
  background: linear-gradient(#9c9c9c, #888);
  border-bottom: 1px solid #444;
}

.doctab {
  display: flex;
  align-items: center;
  justify-content: space-between;
  width: 219px;
  height: 19px;
  padding: 0 5px 0 10px;
  background: var(--face);
  color: #555;
  white-space: nowrap;
}

.view {
  flex: 1;
  min-height: 0;
  display: grid;
  grid-template: 17px 1fr / 17px 1fr 16px;
}

.corner,
.ruler {
  background: #fff;
  border: 0 solid #000;
}

.corner {
  background:
    repeating-linear-gradient(90deg, #000 0 1px, transparent 1px 2px) 0 12px / 100% 1px no-repeat,
    repeating-linear-gradient(#000 0 1px, transparent 1px 2px) 12px 0 / 1px 100% no-repeat,
    #fff;
  border-width: 0 1px 1px 0;
}

.ruler {
  display: flex;
  overflow: hidden;
  font: 9px/10px "DejaVu Sans Condensed", "DejaVu Sans", sans-serif;
  color: #000;
}

.ruler.h {
  border-bottom-width: 1px;
}

.ruler.v {
  grid-row: 2;
  flex-direction: column;
  border-right-width: 1px;
}

.ruler span {
  flex: none;
  --t: linear-gradient(#000, #000);
}

.h span {
  border-left: 1px solid #000;
  padding: 1px 0 0 2px;
  background:
    var(--t) 9px 100% / 1px 3px no-repeat,
    var(--t) 18px 100% / 1px 5px no-repeat,
    var(--t) 27px 100% / 1px 3px no-repeat;
}

.v span {
  border-top: 1px solid #000;
  padding: 2px 9px 0 1px;
  word-break: break-all;
  background:
    var(--t) 100% 9px / 3px 1px no-repeat,
    var(--t) 100% 18px / 5px 1px no-repeat,
    var(--t) 100% 27px / 3px 1px no-repeat;
}

.stage {
  position: relative;
  grid-area: 2 / 2;
  background: #c0c0c0;
  overflow: hidden;
}

.paper {
  position: absolute;
  left: 280px;
  top: 117px;
  width: 1280px;
  height: 720px;
  background: #fff;
}

.guide {
  position: absolute;
  background: #6fe9e9;
}

.gv {
  top: 0;
  bottom: 0;
  width: 1px;
}

.gh {
  left: 0;
  right: 0;
  height: 1px;
}

.g1 { left: 344px; }
.g2 { left: 408px; }
.g3 { left: 1432px; }
.g4 { left: 1496px; }
.g5 { top: 153px; }
.g6 { top: 189px; }
.g7 { top: 765px; }
.g8 { top: 801px; }

.scroll {
  flex: none;
  width: 15px;
  display: flex;
  flex-direction: column;
  align-items: center;
  justify-content: space-between;
  background: #f0f0f0;
  color: #bbb;
  padding: 5px 0;
}

.scroll svg {
  width: 10px;
  height: 7px;
}

.scroll.main {
  grid-area: 1 / 3 / 3 / 4;
  width: auto;
}

.status {
  flex: 0 0 15px;
  display: flex;
  background: var(--face);
  line-height: 16px;
  white-space: nowrap;
}

.status input {
  width: 47px;
  padding-left: 3px;
  background: #fff;
  color: #000;
}

.ver {
  width: 22px;
  display: grid;
  place-items: center;
  border-right: 1px solid #aaa;
}

.info {
  width: 171px;
  text-align: center;
  font-size: 11px;
  color: #000;
}

.status button {
  width: 15px;
  display: grid;
  place-items: center;
  border: 1px solid #aaa;
  border-width: 0 1px;
}

.hscroll {
  flex: 1;
  padding: 2px 4px;
  background: #f0f0f0;
}

.end {
  width: 16px;
  background: #cfcfcf;
}

/* shared panel parts */
.ptabs {
  display: flex;
  align-items: center;
  height: 17px;
  background: linear-gradient(#a0a0a0, #868686);
  border-bottom: 1px solid #777;
  color: #333;
  white-space: nowrap;
}

.ptabs button {
  height: 17px;
  margin-bottom: -1px;
  padding: 0 6px;
  border-right: 1px solid #6c6c6c;
}

.styles .ptabs,
.layers .ptabs {
  font-size: 11px;
}

.ptabs .on {
  background: linear-gradient(#eee, #d6d6d6);
}

.ptabs svg {
  margin: 0 4px 0 auto;
}

.thumb {
  width: 32px;
  height: 19px;
  background: #fff;
  border: 1px solid #000;
}

footer {
  display: flex;
  align-items: center;
  justify-content: flex-end;
  gap: 18px;
}

.grip {
  width: 10px;
  height: 10px;
  margin: 4px 2px 0 -5px;
}

/* history */
.history {
  position: absolute;
  left: 0;
  bottom: 0;
  width: 246px;
  height: 148px;
  display: flex;
  flex-direction: column;
  background: var(--face);
  border: 1px solid #333;
  border-radius: 5px 5px 0 0;
  overflow: hidden;
}

.history .ptabs .on {
  width: 57px;
  font-size: 11px;
  color: #666;
}

.history .bar {
  border-bottom: 1px solid #222;
}

.hbody {
  flex: 1;
  margin: 1px 2px 0;
  display: flex;
  border: 1px solid var(--line);
  border-width: 1px 0;
}

.hlist {
  flex: 1;
  color: #000;
}

.snap {
  display: flex;
  align-items: center;
  height: 27px;
  padding: 0 0 3px 3px;
  border-bottom: 3px double var(--line);
}

.snap .thumb {
  margin: 0 4px 0 5px;
}

.box {
  width: 17px;
  height: 16px;
  border: 1px solid #999;
  border-color: #999 #eee #eee #999;
}

.hrow {
  display: flex;
  align-items: center;
  height: 20px;
  padding-left: 4px;
  border-bottom: 1px solid var(--line);
}

.hrow .name {
  position: relative;
  flex: 1;
  display: flex;
  align-items: center;
  gap: 9px;
  height: 19px;
  margin-left: 2px;
  padding-left: 8px;
  border-left: 1px solid #999;
  font-size: 11px;
}

.sel .name {
  background: var(--blue);
  color: #fff;
}

.pointer {
  position: absolute;
  left: -3px;
  top: 5px;
}

.history footer {
  height: 19px;
  gap: 17px;
  padding-bottom: 2px;
}

.history .grip {
  margin-left: -7px;
}

/* dock */
.dock {
  position: absolute;
  top: 40px;
  right: 17px;
  bottom: -5px;
  width: 305px;
  display: flex;
  flex-direction: column;
}

.bar.wide {
  height: 13px;
  border: 1px solid #333;
  border-radius: 5px 5px 0 0;
  padding-left: 26px;
}

.bar b {
  flex: 1;
}

.dockrow {
  flex: 1;
  min-height: 0;
  display: flex;
  align-items: flex-start;
}

.icons {
  width: 36px;
  height: 74px;
  display: flex;
  flex-direction: column;
  align-items: center;
  background: var(--face);
  border: 1px solid #333;
  border-right: 0;
  padding-top: 3px;
}

.icons svg {
  margin: 8px 0 5px;
}

.panels {
  flex: 1;
  height: 100%;
  display: flex;
  flex-direction: column;
  border: 1px solid #333;
  border-width: 0 1px;
  background: var(--face);
}

.pnl {
  border-bottom: 2px solid #3a3a3a;
}

.sbody {
  display: flex;
  margin: 2px 2px 0;
}

.swatches {
  flex: 1;
  display: grid;
  grid-template: 32px 32px 31px / repeat(7, 32px);
  border-bottom: 1px solid var(--line);
}

.swatches > span {
  display: grid;
  place-items: center;
  border: 1px solid #000;
  border-width: 0 1px 1px 0;
}

.swatches > span:nth-child(n + 15) {
  border-bottom: 0;
}

.swatches > .none {
  border: 0;
}

.s {
  width: 16px;
  height: 16px;
  background: #585858;
}

.picked .s {
  outline: 1px solid #f4f4f4;
  outline-offset: 2px;
  box-shadow: 0 0 0 5px #e8e8e0;
}

.fire { background: radial-gradient(#ff3, #f71 45%, #d10); box-shadow: 0 0 0 1px #500, 2px 2px 2px #777; }
.rings { background: repeating-radial-gradient(#777 0 1px, #222 2px 4px); box-shadow: 2px 2px 2px #888; }
.blue { background: linear-gradient(150deg, #1458a0 30%, #9ce 45%, #2a7cc8 65%, #8cf); }
.pale { background: #a2a2a2; }
.smoke { background: linear-gradient(45deg, #aaa, #444 40%, #222 60%, #777); }
.brown { background: #66552f; }
.bronze { background: linear-gradient(#584620, #8b7650); }
.stripes { background: repeating-linear-gradient(#e03050 0 2px, #d01028 2px 4px, #945 4px 6px); }
.camo { background: linear-gradient(125deg, #111 20%, #2a9 20% 32%, #14c 32% 42%, #e33 42% 50%, #111 50% 62%, #dc4 62% 82%, #111 82%); }
.gold { background: linear-gradient(#860, #a80) center / 8px 10px no-repeat, linear-gradient(135deg, #fe2, #db0); }
.sand { background: linear-gradient(160deg, #b65, #c85 60%, #ca4 62%, #a74); }
.sky { background: linear-gradient(#7bd, #bdf 60%, #9be); border: 2px outset #9cf; }
.chrome { background: linear-gradient(#38d, #eef 50%, #531 55%, #d93); border-radius: 2px; box-shadow: 1px 2px 2px #999; }
.noise { background: repeating-conic-gradient(#555 0 7%, #eee 7% 13%, #999 13% 19%) 0 0 / 5px 5px; }
.violet { background: linear-gradient(#85b, #45a 50%, #a4a); box-shadow: 4px 4px 2px #444; }
.hollow { background: none; border: 1px solid #666; border-radius: 2px; }
.soft { border-radius: 2px; }

.styles footer {
  height: 16px;
}

.closed {
  padding-bottom: 3px;
}

.abody {
  height: 340px;
  padding: 4px 2px 0;
}

.abody p {
  margin: 0;
  width: 220px;
  height: 29px;
  padding-left: 4px;
  border-bottom: 1px solid var(--line);
  color: #a2a2a2;
  text-shadow: 1px 1px #f4f4f4;
}

.irow {
  width: 220px;
  height: 40px;
  display: flex;
  align-items: center;
  justify-content: center;
  gap: 5px;
  background: linear-gradient(var(--line), var(--line)) center top / 120px 1px no-repeat;
}

.irow.first {
  background: none;
}

.irow button {
  background: #fff;
}

.presets {
  display: flex;
  width: 199px;
  margin: 8px 0 0 10px;
  border-top: 1px solid var(--line);
  border-left: 1px solid var(--line);
}

.presets ul {
  flex: 1;
  margin: 0;
  padding: 0;
  list-style: none;
  border: 1px solid #000;
  border-bottom: 0;
  color: #000;
}

.presets li {
  display: flex;
  align-items: center;
  gap: 8px;
  height: 21px;
  padding-left: 4px;
  border-bottom: 1px solid #000;
  font-size: 11px;
}

.presets li::before {
  content: "";
  width: 7px;
  height: 11px;
  background: linear-gradient(90deg, #223 1px, #88c 1px 4px, #335);
  clip-path: polygon(0 0, 100% 50%, 0 100%);
}

.afoot {
  width: 220px;
  margin-top: 11px;
  padding: 2px 5px 0 32px;
  display: flex;
  justify-content: space-between;
  border-top: 1px solid var(--line);
}

.layers {
  flex: 1;
  min-height: 0;
  display: flex;
  flex-direction: column;
  border: 0;
}

.lopts {
  flex: 0 0 27px;
  display: flex;
  align-items: center;
  margin: 0 2px;
  padding: 0 2px 0 4px;
  border-bottom: 1px solid var(--line);
  white-space: nowrap;
}

.lopts label,
.locks {
  color: #a2a2a2;
  text-shadow: 1px 1px #f4f4f4;
}

.lopts label {
  flex: 1;
  padding-left: 3px;
}

.lopts .select {
  width: 138px;
  height: 20px;
}

.lopts .select select {
  color: #555;
}

.locks {
  display: flex;
  align-items: center;
  gap: 6px;
  font-size: 11px;
}

.locks svg {
  color: #444;
}

.second label {
  text-align: right;
  padding-right: 3px;
}

.num {
  display: flex;
  height: 19px;
  border: 1px solid #999;
  color: #777;
}

.num input {
  width: 39px;
  padding-left: 3px;
  border: 1px solid #e8e8e8;
  font-size: 11px;
}

.num button {
  width: 18px;
  display: grid;
  place-items: center;
  background: #e0e0e0;
  border: 1px solid #f4f4f4;
}

.lbody {
  flex: 1;
  min-height: 0;
  display: flex;
  margin: 0 2px;
  border-bottom: 1px solid var(--line);
}

.llist {
  flex: 1;
}

.layer {
  display: flex;
  align-items: center;
  height: 26px;
  border-bottom: 1px solid var(--line);
}

.eye {
  width: 16px;
  height: 16px;
  margin: 0 4px 0 3px;
  display: grid;
  place-items: center;
  border: 1px solid #999;
  border-color: #999 #eee #eee #999;
}

.bgname {
  flex: 1;
  display: flex;
  align-items: center;
  gap: 9px;
  height: 25px;
  padding: 0 15px 0 3px;
  background: var(--blue);
  color: #fff;
}

.bgname svg {
  margin-left: auto;
  color: #222;
}

.layers footer {
  flex: 0 0 19px;
  gap: 14px;
  padding-bottom: 3px;
}

.layers .grip {
  margin-left: -1px;
}

.fx {
  font: italic bold 13px/14px "Liberation Serif", serif;
  color: #888;
}

/* paste dialog */
.dialog {
  position: absolute;
  top: 292px;
  left: 0;
  right: 0;
  width: 278px;
  margin: 0 auto;
  background: #ededed;
  border: 1px solid #3f8fd8;
  box-shadow: 0 4px 14px rgba(0, 0, 0, 0.35);
  color: #000;
}

.title {
  display: flex;
  align-items: center;
  justify-content: space-between;
  height: 25px;
  padding: 0 10px 0 4px;
  background: #fff;
  font-size: 11px;
}

.content {
  display: flex;
  align-items: flex-start;
  justify-content: space-between;
  height: 124px;
  padding: 9px 11px 0 10px;
}

fieldset {
  width: 145px;
  margin: 0;
  padding: 3px 0 4px 9px;
  border: 1px solid #999;
}

legend {
  margin-left: 6px;
  padding: 0 4px;
}

fieldset label {
  display: flex;
  align-items: center;
  gap: 3px;
  height: 20px;
  font-size: 11px;
  white-space: nowrap;
}

.focus {
  outline: 1px dotted #000;
}

input[type="radio"] {
  width: 13px;
  height: 13px;
  appearance: none;
  border: 1px solid #333;
  border-radius: 50%;
  background: #fff;
}

input[type="radio"]:checked {
  background: radial-gradient(circle, #222 4px, #fff 4px);
}

.btns {
  display: flex;
  flex-direction: column;
  gap: 9px;
  padding-top: 8px;
}

.btns button {
  width: 93px;
  height: 19px;
  background: #e1e1e1;
  border: 1px solid #adadad;
  font-size: 11px;
}

.btns .ok {
  border: 2px solid var(--blue);
}
```
FILE: rulers.js
```js
// 1mm at 66.67% zoom
const MM = 1280 / 677.333;

function buildRuler(el, origin, from, to) {
  const pos = (mm) => Math.round(origin + mm * MM);
  const side = el.classList.contains("h") ? "width" : "height";
  const margin = el.classList.contains("h") ? "marginLeft" : "marginTop";

  for (let mm = from; mm <= to; mm += 20) {
    const cell = document.createElement("span");
    cell.style[side] = pos(mm + 20) - pos(mm) + "px";
    if (mm === from) {
      cell.style[margin] = pos(mm) + "px";
    } else {
      cell.textContent = Math.abs(mm);
    }
    el.append(cell);
  }
}

buildRuler(document.querySelector(".ruler.h"), 280, -160, 820);
buildRuler(document.querySelector(".ruler.v"), 117, -80, 440);
```
